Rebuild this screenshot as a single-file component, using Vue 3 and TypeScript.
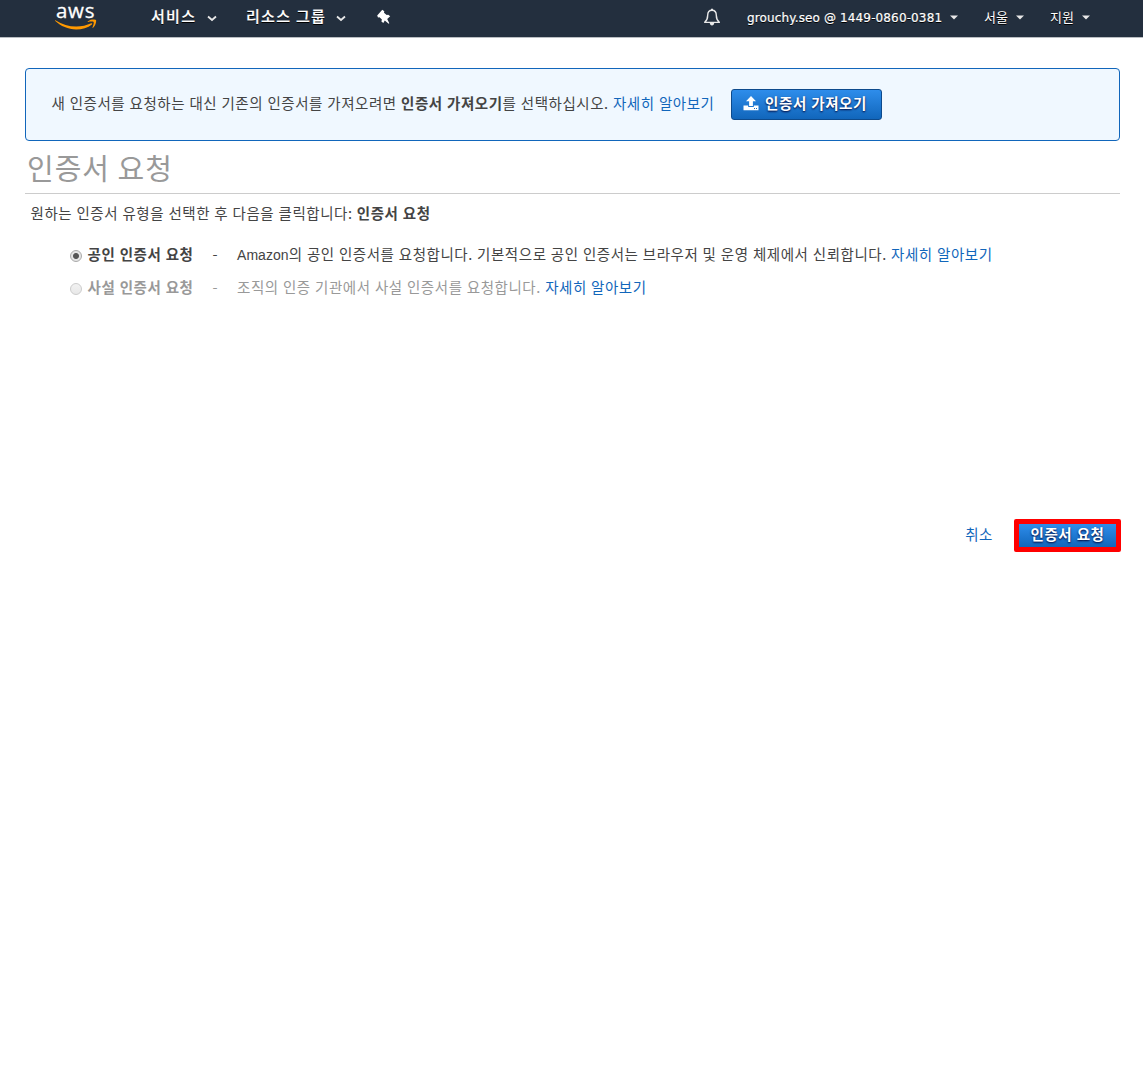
<script setup lang="ts">
import { ref } from 'vue'

interface CertOption {
  id: string
  label: string
  latin: string
  description: string
  disabled: boolean
}

const selected = ref('public')

const options: CertOption[] = [
  {
    id: 'public',
    label: '공인 인증서 요청',
    latin: 'Amazon',
    description: '의 공인 인증서를 요청합니다. 기본적으로 공인 인증서는 브라우저 및 운영 체제에서 신뢰합니다.',
    disabled: false,
  },
  {
    id: 'private',
    label: '사설 인증서 요청',
    latin: '',
    description: '조직의 인증 기관에서 사설 인증서를 요청합니다.',
    disabled: true,
  },
]
</script>

<template>
  <div class="console">
    <header class="nav">
      <a class="logo" aria-label="aws">
        <span class="logo-text">aws</span>
        <svg class="smile" width="42" height="12" viewBox="0 0 42 12">
          <path d="M0.4 1.2C7 5.6 14 7.6 21.2 7.6c5.2 0 10.800-1.300 15-3.300.8-.4 1.500.5.7 1.100C33 8.700 27 10.400 21.200 10.400 13 10.400 5.800 7.300.300 2.100c-.5-.5-.3-1.200.1-.9z" fill="#f90" />
          <path d="M38.600 3.100c-.6-.8-4-.4-5.500-.2-.5.1-.5-.4-.1-.7C35.700.100 40.300.300 41 1.100c.5.700-.1 5.600-2.900 7.700-.4.300-.8.200-.6-.3.600-1.400 1.700-4.600 1.100-5.400z" fill="#f90" />
        </svg>
      </a>
      <span class="menu services">서비스</span>
      <svg class="chev c1" width="10" height="7" viewBox="0 0 10 7"><path d="M1 1.500l4 3.500 4-3.500" /></svg>
      <span class="menu groups">리소스 그룹</span>
      <svg class="chev c2" width="10" height="7" viewBox="0 0 10 7"><path d="M1 1.500l4 3.500 4-3.500" /></svg>
      <svg class="pin" width="14" height="16" viewBox="0 0 14 16">
        <path d="M5.300.8l2 1.500-.3 1.400 2.700 2.400 1.500-.4 2 1.600-3 2.800 2.100 4.100-.6.600-3.900-3.300-1.500 2.600-1.900-1.700.5-1.900-2.400-2.300-1.500.3L.2 6.400z" fill="#fff" />
      </svg>
      <div class="right">
        <svg class="bell" width="18" height="19" viewBox="0 0 18 19">
          <path d="M9 2.300c-3 0-4.300 2.300-4.300 5 0 3.500-.8 5.200-3 7.100h14.600c-2.200-1.900-3-3.600-3-7.100 0-2.700-1.300-5-4.300-5z" fill="none" stroke="#e8e8e8" stroke-width="1.400" stroke-linejoin="round" />
          <path d="M8 .8h2v1.500H8zM6.800 15h4.400c0 1.600-1 2.500-2.200 2.500S6.800 16.600 6.800 15z" fill="#e8e8e8" />
        </svg>
        <span class="account">grouchy.seo @ 1449-0860-0381</span>
        <svg class="caret" width="8" height="5" viewBox="0 0 8 5"><path d="M0 .5h8L4 4.500z" /></svg>
        <span class="small region">서울</span>
        <svg class="caret" width="8" height="5" viewBox="0 0 8 5"><path d="M0 .5h8L4 4.500z" /></svg>
        <span class="small support">지원</span>
        <svg class="caret" width="8" height="5" viewBox="0 0 8 5"><path d="M0 .5h8L4 4.500z" /></svg>
      </div>
    </header>

    <main class="content">
      <section class="notice">
        <p class="text">새 인증서를 요청하는 대신 기존의 인증서를 가져오려면 <b>인증서 가져오기</b>를 선택하십시오. <a class="link">자세히 알아보기</a></p>
        <button class="button import" type="button">
          <svg width="16" height="15" viewBox="0 0 16 15">
            <path d="M8 0l5 5.200H9.900V10H6.100V5.200H3zM.5 9.500h4.700v1.400h5.600V9.500h4.700v4.700H.5z" fill="#fff" />
            <path d="M11 12h1v1h-1zM13 12h1v1h-1z" fill="#1a6fc6" />
          </svg>
          <span>인증서 가져오기</span>
        </button>
      </section>

      <h1 class="title">인증서 요청</h1>
      <p class="text intro">원하는 인증서 유형을 선택한 후 다음을 클릭합니다: <b>인증서 요청</b></p>

      <div class="options">
        <label v-for="o in options" :key="o.id" class="option text" :class="{ disabled: o.disabled }">
          <input v-model="selected" class="radio" type="radio" name="type" :value="o.id" :disabled="o.disabled" />
          <b class="label">{{ o.label }}</b>
          <span class="dash">-</span>
          <span><span v-if="o.latin" class="latin">{{ o.latin }}</span>{{ o.description }} <a class="link">자세히 알아보기</a></span>
        </label>
      </div>

      <footer class="actions">
        <a class="link text cancel">취소</a>
        <button class="button request" type="button"><span>인증서 요청</span></button>
      </footer>
    </main>
  </div>
</template>

<style>
body {
  margin: 0;
  background: #fff;
}
</style>

<style scoped>
.console {
  box-sizing: border-box;
  width: 1143px;
  height: 1072px;
  overflow: hidden;
  color: #444;
  font-family: "Liberation Sans", "Noto Sans CJK KR", sans-serif;
}
.nav {
  box-sizing: border-box;
  display: flex;
  align-items: flex-start;
  height: 38px;
  padding-left: 55px;
  background: #232f3e;
  border-bottom: 1px solid #b9bdc2;
  color: #fff;
}
.logo {
  display: flex;
  flex-direction: column;
  width: 42px;
  margin-right: 54px;
}
.logo-text {
  height: 22px;
  padding-left: 1px;
  font: 500 20.500px/21px "Open Sans", sans-serif;
  letter-spacing: 0.7px;
  -webkit-text-stroke: 0.3px #fff;
}
.smile {
  margin-top: -3px;
}
.menu {
  font: 500 15px/32px "Noto Sans CJK KR", sans-serif;
  letter-spacing: 1.300px;
  -webkit-text-stroke: 0.2px #fff;
  text-shadow: 0 1px 0 #000;
  white-space: nowrap;
}
.services {
  width: 56px;
}
.groups {
  width: 90px;
}
.chev {
  margin-top: 15px;
  fill: none;
  stroke: #e8e8e8;
  stroke-width: 1.800;
}
.c1 {
  margin-right: 29px;
}
.c2 {
  margin-right: 31px;
}
.pin {
  margin-top: 9px;
}
.right {
  display: flex;
  align-items: flex-start;
  margin: 0 53px 0 auto;
}
.bell {
  margin: 8px 26px 0 0;
}
.account {
  width: 203px;
  font: 12px/36px "DejaVu Sans", sans-serif;
  letter-spacing: 0.13px;
  -webkit-text-stroke: 0.2px #fff;
  text-shadow: 0 1px 0 #000;
  white-space: nowrap;
}
.small {
  width: 32px;
  font: 400 13px/33px "Noto Sans CJK KR", sans-serif;
  text-shadow: 0 1px 0 #000;
}
.region,
.support {
  margin-left: 26px;
}
.caret {
  margin-top: 15px;
  fill: #e8e8e8;
}
.content {
  padding: 30px 23px 0 25px;
}
.text {
  margin: 0;
  font: 400 14.500px/22px "Noto Sans CJK KR", sans-serif;
  letter-spacing: 0.54px;
  word-spacing: 0.54px;
  white-space: nowrap;
}
.text b {
  font-weight: 700;
}
.link {
  color: #1166bb;
}
.notice {
  box-sizing: border-box;
  display: flex;
  align-items: center;
  height: 73px;
  padding-left: 25.500px;
  background: #f0f8ff;
  border: 1px solid #1166bb;
  border-radius: 4px;
}
.notice .text {
  width: 679.500px;
  padding-bottom: 3px;
}
.button {
  box-sizing: border-box;
  display: flex;
  align-items: center;
  margin: 0;
  padding: 0;
  border: 1px solid #0d4a8c;
  border-radius: 3px;
  background: linear-gradient(#2e8deb, #1166bb);
  color: #fff;
  font: 700 14.500px/22px "Noto Sans CJK KR", sans-serif;
  letter-spacing: 0.6px;
  word-spacing: 0.5px;
  text-shadow: 0 1px 2px #003;
  white-space: nowrap;
}
.button span {
  padding-bottom: 3px;
}
.import {
  width: 151px;
  height: 31px;
  padding-left: 11px;
  gap: 6px;
}
.import svg {
  margin-bottom: 2px;
}
.title {
  box-sizing: border-box;
  height: 53px;
  margin: 0;
  padding-left: 2px;
  border-bottom: 1px solid #ccc;
  color: #999;
  font: 400 29px/53px "Noto Sans CJK KR", sans-serif;
  letter-spacing: 1px;
}
.intro {
  margin: 8px 0 0 5.500px;
}
.options {
  margin: 19px 0 0 45px;
}
.option {
  display: flex;
  height: 33px;
}
.disabled {
  color: #999;
}
.radio {
  box-sizing: border-box;
  appearance: none;
  width: 12px;
  height: 12px;
  margin: 7px 5.500px 0 0;
  border: 1px solid #aaa;
  border-radius: 50%;
  background: linear-gradient(#eee, #ddd);
}
.radio:checked {
  background: radial-gradient(circle, #555 0 2.500px, #e5e5e5 3.500px);
}
.radio:disabled {
  border-color: #ccc;
  background: linear-gradient(#f2f2f2, #e8e8e8);
}
.label {
  width: 125px;
}
.dash {
  width: 24.500px;
}
.latin {
  font: 14px "Liberation Sans", sans-serif;
  letter-spacing: 0.05px;
}
.actions {
  display: flex;
  align-items: center;
  justify-content: flex-end;
  gap: 21px;
  height: 33px;
  margin: 210px -1px 0 0;
}
.cancel {
  padding-bottom: 3px;
}
.request {
  width: 107px;
  height: 33px;
  justify-content: center;
  border: 5px solid #f00;
  border-radius: 2px;
  background-clip: padding-box;
}
</style>
